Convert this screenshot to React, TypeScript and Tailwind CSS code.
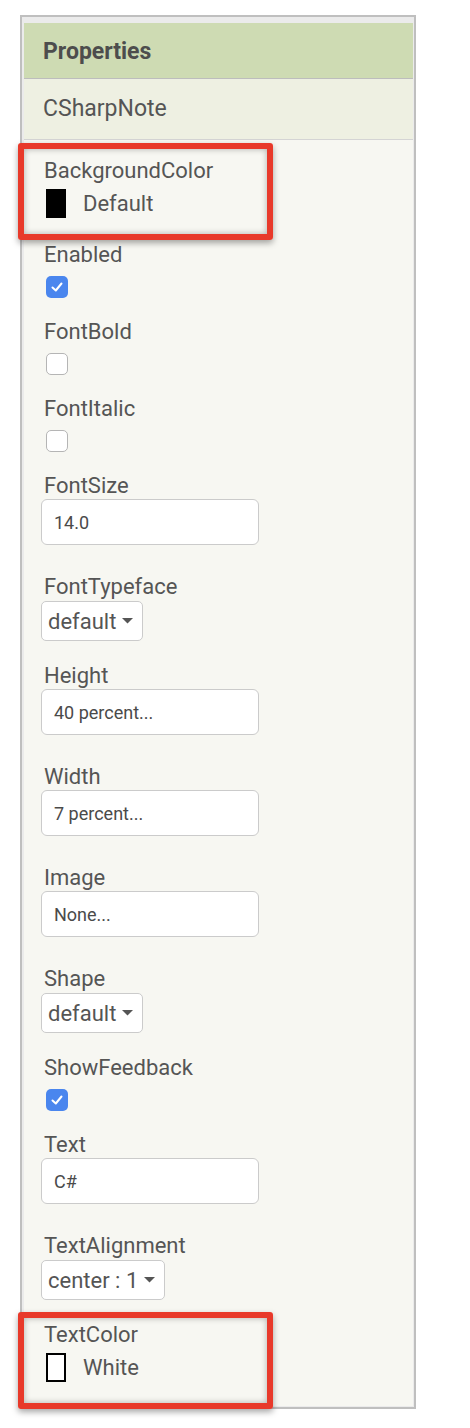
import React from "react";

type Prop =
  | { name: string; kind: "color"; swatch: "black" | "white"; value: string }
  | { name: string; kind: "check"; checked: boolean }
  | { name: string; kind: "input"; value: string }
  | { name: string; kind: "select"; value: string; width: string };

const props: Prop[] = [
  { name: "BackgroundColor", kind: "color", swatch: "black", value: "Default" },
  { name: "Enabled", kind: "check", checked: true },
  { name: "FontBold", kind: "check", checked: false },
  { name: "FontItalic", kind: "check", checked: false },
  { name: "FontSize", kind: "input", value: "14.0" },
  { name: "FontTypeface", kind: "select", value: "default", width: "w-[102px]" },
  { name: "Height", kind: "input", value: "40 percent..." },
  { name: "Width", kind: "input", value: "7 percent..." },
  { name: "Image", kind: "input", value: "None..." },
  { name: "Shape", kind: "select", value: "default", width: "w-[102px]" },
  { name: "ShowFeedback", kind: "check", checked: true },
  { name: "Text", kind: "input", value: "C#" },
  { name: "TextAlignment", kind: "select", value: "center : 1", width: "w-[124px]" },
  { name: "TextColor", kind: "color", swatch: "white", value: "White" },
];

const Caret = () => (
  <svg width="11" height="6" viewBox="0 0 11 6" className="ml-[6px]">
    <path d="M0 0 L11 0 L5.5 5.5 Z" fill="#555" />
  </svg>
);

function Editor({ p }: { p: Prop }) {
  if (p.kind === "color") {
    return (
      <div className="mt-[6px] mb-[23px] flex items-center ml-[5px] h-[29px]">
        <div
          className={`w-[20px] h-[29px] ${
            p.swatch === "black" ? "bg-black" : "bg-white border-2 border-black"
          }`}
        />
        <span className="ml-[17px] text-[22px] leading-[24px]">{p.value}</span>
      </div>
    );
  }
  if (p.kind === "check") {
    return (
      <div className="mt-[9px] mb-[20px] ml-[5px]">
        {p.checked ? (
          <div className="w-[22px] h-[22px] rounded-[5px] bg-[#4a86ee] flex items-center justify-center">
            <svg width="14" height="14" viewBox="0 0 14 14">
              <path d="M2.5 7.5 L5.8 10.5 L11.5 3.5" fill="none" stroke="#fff" strokeWidth="2" strokeLinecap="round" strokeLinejoin="round" />
            </svg>
          </div>
        ) : (
          <div className="w-[22px] h-[22px] rounded-[5px] bg-white border border-[#b5b5b5]" />
        )}
      </div>
    );
  }
  if (p.kind === "input") {
    return (
      <div className="mt-[1px] mb-[28px] w-[218px] h-[46px] rounded-[6px] border-[1.5px] border-[#cbcbcb] bg-white flex items-center pl-[12px] text-[18px] text-[#4a4a4a]">
        {p.value}
      </div>
    );
  }
  return (
    <div
      className={`mt-[2px] mb-[21px] ${p.width} h-[40px] rounded-[5px] border-[1.5px] border-[#cbcbcb] bg-white flex items-center pl-[6px] text-[22px]`}
    >
      {p.value}
      <Caret />
    </div>
  );
}

export default function App() {
  return (
    <div
      className="w-[470px] h-[1428px] bg-white pt-[15px] pl-[20px] text-[#555]"
      style={{ fontFamily: "Roboto, 'Noto Sans', sans-serif" }}
    >
      <div className="relative w-[396px] border-2 border-[#bfbfbf]">
        <div className="bg-[#ebebeb] pt-[6px] pl-[2px] pr-[1px] pb-[1px]">
          <div className="h-[56px] bg-[#cedbb3] border-b-[1.5px] border-[#bdbdbd] flex items-center pl-[19px] pt-[3px]">
            <span className="text-[23px] font-bold text-[#4d4d4d]">Properties</span>
          </div>
          <div className="h-[61px] bg-[#eef0e2] border-b border-[#d4d4d4] flex items-center pl-[19px]">
            <span className="text-[23px]">CSharpNote</span>
          </div>
          <div className="bg-[#f7f7f2] pt-[17px] pl-[17px] pb-[1px]">
            {props.map((p) => (
              <div key={p.name}>
                <div className="ml-[3px] pt-[2px] text-[22px] leading-[24px]">{p.name}</div>
                <Editor p={p} />
              </div>
            ))}
          </div>
        </div>

        {/* annotation boxes */}
        <div className="absolute left-[-4px] top-[126px] w-[255px] h-[97px] border-[6px] border-[#e8392a] rounded-[3px] shadow-[0_3px_6px_rgba(0,0,0,0.35),inset_0_0_6px_rgba(0,0,0,0.3)]" />
        <div className="absolute left-[-4px] top-[1295px] w-[255px] h-[97px] border-[6px] border-[#e8392a] rounded-[3px] shadow-[0_3px_6px_rgba(0,0,0,0.35),inset_0_0_6px_rgba(0,0,0,0.3)]" />
      </div>
    </div>
  );
}
